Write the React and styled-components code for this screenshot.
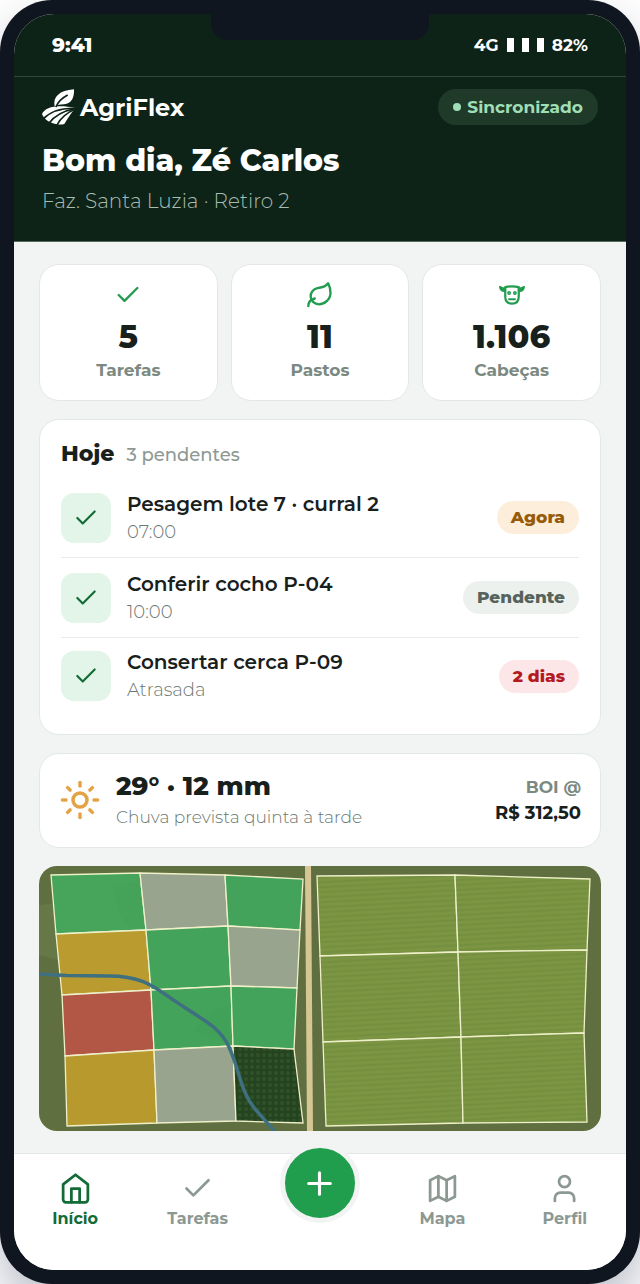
import React from "react";
import styled, { createGlobalStyle } from "styled-components";
import { Check, Plus, Sun, User } from "lucide-react";

const tasks = [
  { title: "Pesagem lote 7 · curral 2", info: "07:00", badge: "Agora", tone: "warning" },
  { title: "Conferir cocho P-04", info: "10:00", badge: "Pendente", tone: "neutral" },
  { title: "Consertar cerca P-09", info: "Atrasada", badge: "2 dias", tone: "danger" },
];

const tones = {
  warning: { background: "#fdeedb", color: "#965a08" },
  neutral: { background: "#ecf1ee", color: "#56635c" },
  danger: { background: "#fde6e7", color: "#b3191f" },
};

const pastures = [
  { points: "12,9 101,7 107,64 17,68", fill: "#46a55b" },
  { points: "101,7 186,9 189,60 107,64", fill: "#98a48e" },
  { points: "186,9 264,13 261,64 189,60", fill: "#43a35a" },
  { points: "17,68 107,64 112,124 23,129", fill: "#b99b2f" },
  { points: "107,64 189,60 192,120 112,124", fill: "#43a35a" },
  { points: "189,60 261,64 258,122 192,120", fill: "#98a48e" },
  { points: "23,129 112,124 115,184 26,190", fill: "#b25746" },
  { points: "112,124 192,120 194,180 115,184", fill: "#43a35a" },
  { points: "192,120 258,122 255,183 194,180", fill: "#43a35a" },
  { points: "26,190 115,184 118,257 28,260", fill: "#b8992e" },
  { points: "115,184 194,180 197,255 118,257", fill: "#98a48e" },
  { points: "194,180 255,183 264,257 197,255", fill: "url(#forest)" },
  { points: "278,10 416,9 419,86 281,90", fill: "url(#crop)" },
  { points: "416,9 551,13 548,84 419,86", fill: "url(#crop)" },
  { points: "281,90 419,86 422,171 284,176", fill: "url(#crop)" },
  { points: "419,86 548,84 545,167 422,171", fill: "url(#crop)" },
  { points: "284,176 422,171 424,257 287,260", fill: "url(#crop)" },
  { points: "422,171 545,167 548,256 424,257", fill: "url(#crop)" },
];

const StrokeIcon = ({ size, children }) => (
  <svg
    width={size}
    height={size}
    viewBox="0 0 24 24"
    fill="none"
    stroke="currentColor"
    strokeWidth="2"
    strokeLinecap="round"
    strokeLinejoin="round"
    aria-hidden="true"
  >
    {children}
  </svg>
);

const LeafIcon = () => (
  <StrokeIcon size={28}>
    <path d="M11 20A7 7 0 0 1 9.8 6.1C15.5 5 17 4.48 19 2c1 2 2 4.18 2 8 0 5.5-4.78 10-10 10Z" />
    <path d="M2 21.5c0-3 1.85-5.6 5.5-6.5" />
  </StrokeIcon>
);

const CowIcon = () => (
  <StrokeIcon size={28}>
    <path d="M6.2 5.3Q12 3.8 17.8 5.3V13c0 4-2 6.4-5.8 6.4S6.2 17 6.2 13Z" strokeWidth="1.9" />
    <path d="M6.2 6.2C5 6.4 3.4 6.2 1.7 5c.2 2.4 1.8 3.7 4.5 3.5Z" fill="currentColor" strokeWidth="1.6" />
    <path d="M17.8 6.2c1.2.2 2.8 0 4.5-1.2-.2 2.4-1.8 3.7-4.5 3.5Z" fill="currentColor" strokeWidth="1.6" />
    <circle cx="9.5" cy="10.3" r="1" strokeWidth="1.3" />
    <circle cx="14.5" cy="10.3" r="1" strokeWidth="1.3" />
    <path d="M9.5 15.6h5" strokeWidth="1.8" />
  </StrokeIcon>
);

const HomeIcon = () => (
  <StrokeIcon size={33}>
    <path d="m3 9 9-7 9 7v11a2 2 0 0 1-2 2H5a2 2 0 0 1-2-2z" />
    <path d="M9 22V12h6v10" />
  </StrokeIcon>
);

const MapIcon = () => (
  <StrokeIcon size={33}>
    <path d="m3 6 6-3 6 3 6-3v15l-6 3-6-3-6 3z" />
    <path d="M9 3v15M15 6v15" />
  </StrokeIcon>
);

const LogoMark = () => (
  <svg width="34" height="36" viewBox="0 0 102 108" fill="#ffffff" aria-hidden="true">
    <path d="M38 52C32 24 52 4 96 1 97 25 90 44 66 46 54 46 46 48 38 52Z" />
    <path d="M0 75C10 52 48 46 102 57 91 66 80 84 67 105 60 107 52 107 45 106 26 103 6 92 0 75Z" />
    <g fill="none" stroke="#0e2318" strokeWidth="5">
      <path d="M42 54C48 38 60 27 77 18" />
      <path d="M2 91C22 70 58 56 104 58" />
      <path d="M19 105C36 81 66 65 104 58" />
      <path d="M44 110C54 88 76 70 104 58" />
    </g>
  </svg>
);

const FarmMap = () => (
  <MapDrawing viewBox="0 0 562 265" role="img" aria-label="Mapa dos pastos">
    <defs>
      <pattern id="crop" width="12" height="5" patternUnits="userSpaceOnUse" patternTransform="rotate(-3)">
        <rect width="12" height="5" fill="#7b9543" />
        <rect width="12" height="2" fill="#748f3f" />
      </pattern>
      <pattern id="forest" width="6" height="6" patternUnits="userSpaceOnUse">
        <rect width="6" height="6" fill="#24431f" />
        <circle cx="3" cy="3" r="2" fill="#31512a" />
      </pattern>
    </defs>
    <rect width="562" height="265" fill="#606f3f" />
    <path d="M0 39Q40 33 60 55T40 100L0 89Z" fill="#667845" />
    <path d="M266 0h6l2 265h-6Z" fill="#d6c695" />
    {pastures.map(({ points, fill }) => (
      <polygon key={points} points={points} fill={fill} stroke="#eff0ca" strokeWidth="1.3" />
    ))}
    <path
      d="M74 20Q76 45 91 62L105 62 100 15ZM155 165Q166 145 189 140L191 178Z"
      fill="#3b9953"
      opacity="0.2"
    />
    <path
      d="M0 108Q14 109 28 109.5L70 110C105 110 116 122 139 137 164 154 181 161 190 181 201 205 201 225 216 243L237 267"
      fill="none"
      stroke="#3e7080"
      strokeWidth="3.5"
    />
  </MapDrawing>
);

const App = () => {
  return (
    <>
      <GlobalStyle />
      <Phone>
        <Screen>
          <Notch />
          <StatusBar>
            <Clock>9:41</Clock>
            <Signal>
              4G
              <Bars aria-hidden="true">
                <Bar />
                <Bar />
                <Bar />
              </Bars>
              82%
            </Signal>
          </StatusBar>

          <Header>
            <BrandRow>
              <Brand>
                <LogoMark />
                AgriFlex
              </Brand>
              <SyncStatus>
                <SyncDot />
                Sincronizado
              </SyncStatus>
            </BrandRow>
            <Greeting>Bom dia, Zé Carlos</Greeting>
            <FarmName>Faz. Santa Luzia · Retiro 2</FarmName>
          </Header>

          <Content>
            <Stats>
              <StatCard>
                <Check size={28} />
                <StatValue>5</StatValue>
                <StatLabel>Tarefas</StatLabel>
              </StatCard>
              <StatCard>
                <LeafIcon />
                <StatValue>11</StatValue>
                <StatLabel>Pastos</StatLabel>
              </StatCard>
              <StatCard>
                <CowIcon />
                <StatValue>1.106</StatValue>
                <StatLabel>Cabeças</StatLabel>
              </StatCard>
            </Stats>

            <TodayCard>
              <TodayHeader>
                <TodayTitle>Hoje</TodayTitle>
                <PendingCount>3 pendentes</PendingCount>
              </TodayHeader>
              <TaskList>
                {tasks.map((task) => (
                  <TaskRow key={task.title}>
                    <TaskButton type="button" aria-label={`Concluir ${task.title}`}>
                      <Check size={26} />
                    </TaskButton>
                    <TaskText>
                      <TaskTitle>{task.title}</TaskTitle>
                      <TaskInfo>{task.info}</TaskInfo>
                    </TaskText>
                    <Badge $tone={task.tone}>{task.badge}</Badge>
                  </TaskRow>
                ))}
              </TaskList>
            </TodayCard>

            <WeatherCard>
              <Sun size={42} color="#e3a344" />
              <WeatherText>
                <WeatherValue>29° · 12 mm</WeatherValue>
                <WeatherInfo>Chuva prevista quinta à tarde</WeatherInfo>
              </WeatherText>
              <Quote>
                <QuoteLabel>BOI @</QuoteLabel>
                <QuoteValue>R$ 312,50</QuoteValue>
              </Quote>
            </WeatherCard>

            <FarmMap />
          </Content>

          <TabBar>
            <TabLink href="#inicio" $active>
              <HomeIcon />
              Início
            </TabLink>
            <TabLink href="#tarefas">
              <Check size={33} />
              Tarefas
            </TabLink>
            <AddButton type="button" aria-label="Adicionar">
              <Plus size={37} />
            </AddButton>
            <TabLink href="#mapa">
              <MapIcon />
              Mapa
            </TabLink>
            <TabLink href="#perfil">
              <User size={33} />
              Perfil
            </TabLink>
          </TabBar>
        </Screen>
      </Phone>
    </>
  );
};

const GlobalStyle = createGlobalStyle`
  * {
    box-sizing: border-box;
  }

  body {
    margin: 0;
    background: #ffffff;
    font-family: Montserrat, Inter, sans-serif;
    color: #18201c;
    overflow-x: hidden;
  }

  h1, h2, h3, p, ul {
    margin: 0;
    padding: 0;
  }

  svg {
    flex-shrink: 0;
  }
`;

const Phone = styled.div`
  display: flex;
  min-height: 100vh;
  padding: 14px;
  background: #10161f;
  border-radius: 52px;
  box-shadow: 0 24px 48px rgba(30, 41, 72, 0.3);
`;

const Screen = styled.div`
  position: relative;
  flex: 1;
  min-width: 0;
  display: flex;
  flex-direction: column;
  background: #f2f4f4;
  border-radius: 40px;
  overflow: hidden;
`;

const Notch = styled.div`
  position: absolute;
  top: 0;
  left: 50%;
  width: 218px;
  height: 26px;
  margin-left: -109px;
  background: #10161f;
  border-radius: 0 0 16px 16px;
`;

const StatusBar = styled.div`
  display: flex;
  align-items: center;
  justify-content: space-between;
  height: 63px;
  padding: 0 38px;
  background: #0e2318;
  border-bottom: 1px solid #32463b;
  color: #ffffff;
`;

const Clock = styled.span`
  font-size: 20px;
  font-weight: 800;
`;

const Signal = styled.span`
  display: flex;
  align-items: center;
  gap: 8px;
  font-size: 17px;
  font-weight: 700;
`;

const Bars = styled.span`
  display: flex;
  gap: 8px;
`;

const Bar = styled.span`
  width: 7px;
  height: 14px;
  background: #ffffff;
`;

const Header = styled.header`
  padding: 12px 28px 27px;
  background: #0e2318;
  border-bottom: 1px solid #53695c;
  color: #ffffff;
`;

const BrandRow = styled.div`
  display: flex;
  align-items: center;
  justify-content: space-between;
`;

const Brand = styled.div`
  display: flex;
  align-items: center;
  gap: 4px;
  font-size: 24px;
  font-weight: 700;
`;

const SyncStatus = styled.span`
  display: flex;
  align-items: center;
  gap: 6px;
  height: 36px;
  padding: 0 15px;
  background: #203a2a;
  border-radius: 18px;
  color: #a0dfb5;
  font-size: 17px;
  font-weight: 700;
`;

const SyncDot = styled.span`
  width: 8px;
  height: 8px;
  background: #a0dfb5;
  border-radius: 50%;
`;

const Greeting = styled.h1`
  margin-top: 16px;
  font-size: 30px;
  line-height: 40px;
  font-weight: 800;
`;

const FarmName = styled.p`
  margin-top: 7px;
  color: #a8bdb1;
  font-size: 20px;
  line-height: 26px;
  font-weight: 300;
`;

const Content = styled.main`
  flex: 1;
  display: flex;
  flex-direction: column;
  gap: 18px;
  padding: 22px 25px;
`;

const Card = styled.section`
  background: #ffffff;
  border: 1px solid #e3e8e6;
  border-radius: 20px;
`;

const Stats = styled.div`
  display: grid;
  grid-template-columns: repeat(3, 1fr);
  gap: 13px;
`;

const StatCard = styled(Card)`
  display: flex;
  flex-direction: column;
  align-items: center;
  padding: 16px 8px 18px;
  color: #229c4e;
`;

const StatValue = styled.strong`
  margin-top: 8px;
  color: #18201c;
  font-size: 32px;
  line-height: 40px;
  font-weight: 800;
`;

const StatLabel = styled.span`
  margin-top: 1px;
  color: #7b8981;
  font-size: 17px;
  line-height: 24px;
  font-weight: 700;
`;

const TodayCard = styled(Card)`
  padding: 18px 21px 20px;
`;

const TodayHeader = styled.div`
  display: flex;
  align-items: baseline;
  gap: 12px;
  line-height: 32px;
`;

const TodayTitle = styled.h2`
  font-size: 22px;
  font-weight: 800;
`;

const PendingCount = styled.span`
  color: #8e9993;
  font-size: 18px;
  font-weight: 500;
`;

const TaskList = styled.ul`
  margin-top: 7px;
  list-style: none;
`;

const TaskRow = styled.li`
  display: flex;
  align-items: center;
  gap: 16px;
  height: 80px;
  border-bottom: 1px solid #e6ebe9;

  &:last-child {
    height: 76px;
    border-bottom: none;
  }
`;

const TaskButton = styled.button`
  display: flex;
  align-items: center;
  justify-content: center;
  flex-shrink: 0;
  width: 50px;
  height: 50px;
  padding: 0;
  border: none;
  border-radius: 13px;
  background: #e3f5e8;
  color: #136b36;
  cursor: pointer;
`;

const TaskText = styled.div`
  flex: 1;
  min-width: 0;
`;

const TaskTitle = styled.h3`
  font-size: 20px;
  line-height: 28px;
  font-weight: 600;
`;

const TaskInfo = styled.p`
  color: #6c7871;
  font-size: 18px;
  line-height: 28px;
  font-weight: 300;
`;

const Badge = styled.span`
  padding: 4px 14px;
  border-radius: 17px;
  background: ${({ $tone }) => tones[$tone].background};
  color: ${({ $tone }) => tones[$tone].color};
  font-size: 17px;
  line-height: 25px;
  font-weight: 800;
`;

const WeatherCard = styled(Card)`
  display: flex;
  align-items: center;
  gap: 15px;
  padding: 14px 19px 16px;
`;

const WeatherText = styled.div`
  flex: 1;
`;

const WeatherValue = styled.p`
  font-size: 26px;
  line-height: 36px;
  font-weight: 800;
`;

const WeatherInfo = styled.p`
  color: #6c7871;
  font-size: 17px;
  line-height: 27px;
  font-weight: 300;
`;

const Quote = styled.div`
  text-align: right;
  font-weight: 700;
  line-height: 26px;
`;

const QuoteLabel = styled.p`
  color: #7b8981;
  font-size: 17px;
`;

const QuoteValue = styled.p`
  font-size: 18px;
`;

const MapDrawing = styled.svg`
  display: block;
  width: 100%;
  height: auto;
  border-radius: 18px;
`;

const TabBar = styled.nav`
  display: grid;
  grid-template-columns: repeat(5, 1fr);
  justify-items: center;
  align-items: start;
  height: 117px;
  border-top: 1px solid #e3e8e6;
  background: #ffffff;
`;

const TabLink = styled.a`
  display: flex;
  flex-direction: column;
  align-items: center;
  padding-top: 18px;
  color: ${({ $active }) => ($active ? "#136b36" : "#8c9892")};
  font-size: 16px;
  line-height: 28px;
  font-weight: 700;
  text-decoration: none;
`;

const AddButton = styled.button`
  display: flex;
  align-items: center;
  justify-content: center;
  width: 80px;
  height: 80px;
  margin-top: -11px;
  padding: 0;
  border: 5px solid #f2f4f4;
  border-radius: 50%;
  background: #219e4d;
  color: #ffffff;
  cursor: pointer;
`;

export default App;
